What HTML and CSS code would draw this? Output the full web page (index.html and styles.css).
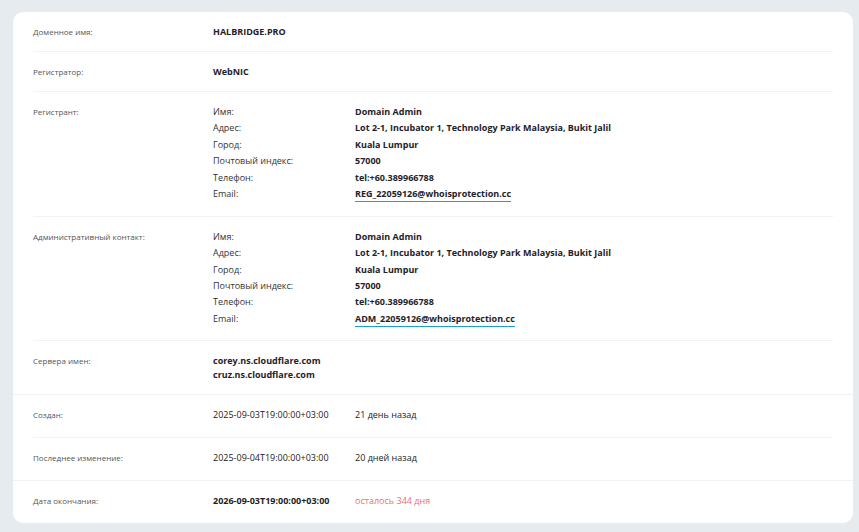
FILE: index.html
```html
<!DOCTYPE html>
<html lang="ru">
<head>
<meta charset="utf-8">
<title>Whois</title>
<link rel="stylesheet" href="styles.css">
</head>
<body>
<div class="card">
  <div class="row single">
    <div class="label">Доменное имя:</div>
    <div class="value strong">HALBRIDGE.PRO</div>
  </div>
  <div class="row single">
    <div class="label">Регистратор:</div>
    <div class="value strong">WebNIC</div>
  </div>
  <div class="row contact">
    <div class="label">Регистрант:</div>
    <div class="details">
      <span class="k">Имя:</span><span class="v">Domain Admin</span>
      <span class="k">Адрес:</span><span class="v">Lot 2-1, Incubator 1, Technology Park Malaysia, Bukit Jalil</span>
      <span class="k">Город:</span><span class="v">Kuala Lumpur</span>
      <span class="k">Почтовый индекс:</span><span class="v">57000</span>
      <span class="k">Телефон:</span><span class="v">tel:+60.389966788</span>
      <span class="k">Email:</span><span class="v"><span class="mail">REG_22059126@whoisprotection.cc</span></span>
    </div>
  </div>
  <div class="row contact">
    <div class="label">Административный контакт:</div>
    <div class="details">
      <span class="k">Имя:</span><span class="v">Domain Admin</span>
      <span class="k">Адрес:</span><span class="v">Lot 2-1, Incubator 1, Technology Park Malaysia, Bukit Jalil</span>
      <span class="k">Город:</span><span class="v">Kuala Lumpur</span>
      <span class="k">Почтовый индекс:</span><span class="v">57000</span>
      <span class="k">Телефон:</span><span class="v">tel:+60.389966788</span>
      <span class="k">Email:</span><span class="v"><span class="mail">ADM_22059126@whoisprotection.cc</span></span>
    </div>
  </div>
  <div class="row ns wide">
    <div class="label">Сервера имен:</div>
    <div class="value strong ns-list">
      <div>corey.ns.cloudflare.com</div>
      <div>cruz.ns.cloudflare.com</div>
    </div>
  </div>
  <div class="row date">
    <div class="label">Создан:</div>
    <div class="pair"><span class="d">2025-09-03T19:00:00+03:00</span><span class="ago">21 день назад</span></div>
  </div>
  <div class="row date wide">
    <div class="label">Последнее изменение:</div>
    <div class="pair"><span class="d">2025-09-04T19:00:00+03:00</span><span class="ago">20 дней назад</span></div>
  </div>
  <div class="row date last">
    <div class="label">Дата окончания:</div>
    <div class="pair"><span class="d strong">2026-09-03T19:00:00+03:00</span><span class="ago warn">осталось 344 дня</span></div>
  </div>
</div>
</body>
</html>
```

FILE: styles.css
```css
* { box-sizing: border-box; }
html, body { margin: 0; padding: 0; }
body {
  background: #e6ebef;
  font-family: "Open Sans", "Liberation Sans", sans-serif;
  color: #222;
  padding: 12px 6px 0 13px;
  height: 532px;
  overflow: hidden;
}
.card {
  background: #fff;
  border-radius: 10px;
  padding: 0 20px;
  width: 840px;
}
.row {
  display: grid;
  grid-template-columns: 180px 1fr;
  border-bottom: 1px solid #f2f2f2;
}
.row.wide {
  margin: 0 -20px;
  padding-left: 20px;
  padding-right: 20px;
}
.row.last { border-bottom: none; }
.label {
  font-size: 8px;
  color: #555;
  line-height: 14px;
}
.value { font-size: 9px; line-height: 14px; }
.strong { font-weight: 700; color: #1f2229; }
.single { padding: 12.5px 0; }
.contact { padding: 12px 0 13.3px; }
.contact .label { line-height: 16.4px; }
.details {
  display: grid;
  grid-template-columns: 142px 1fr;
  font-size: 9px;
  line-height: 16.4px;
}
.details .k { color: #333; }
.details .v { font-weight: 700; color: #1f2229; }
.mail {
  display: inline-block;
  line-height: 13px;
  border-bottom: 1.5px solid #1a9fdc;
  padding-bottom: 1px;
}
.ns { padding: 13px 0 12px; }
.ns .label { line-height: 13px; }
.ns-list { line-height: 14px; }
.date { padding: 12.5px 0 15.5px; }
.row.last { padding-bottom: 15.5px; }
.pair {
  display: grid;
  grid-template-columns: 142px 1fr;
  font-size: 9px;
  line-height: 14px;
}
.d { color: #222; }
.ago { color: #222; }
.ago.warn { color: #ee6e6e; }
```
